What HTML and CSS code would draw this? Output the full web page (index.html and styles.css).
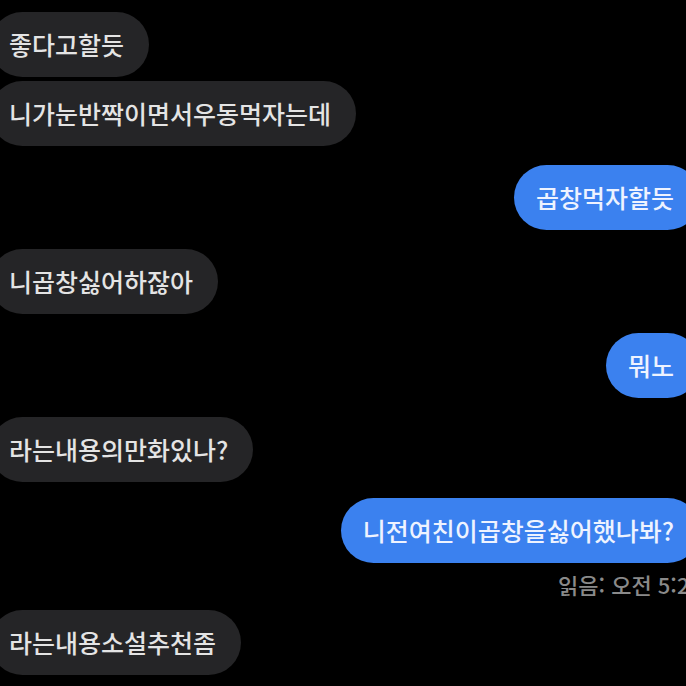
FILE: index.html
```html
<!DOCTYPE html>
<html lang="ko">
<head>
<meta charset="utf-8">
<title>채팅</title>
<link rel="stylesheet" href="styles.css">
</head>
<body>
<main class="chat">
  <div class="msg in first">좋다고할듯</div>
  <div class="msg in same">니가눈반짝이면서우동먹자는데</div>
  <div class="msg out switch">곱창먹자할듯</div>
  <div class="msg in switch">니곱창싫어하잖아</div>
  <div class="msg out switch">뭐노</div>
  <div class="msg in switch">라는내용의만화있나?</div>
  <div class="msg out switch-sm">니전여친이곱창을싫어했나봐?</div>
  <div class="read">읽음: 오전 5:20</div>
  <div class="msg in">라는내용소설추천좀</div>
</main>
</body>
</html>
```

FILE: styles.css
```css
html, body {
  margin: 0;
  padding: 0;
  background: #000;
  width: 686px;
  height: 686px;
  overflow: hidden;
}

.chat {
  display: flex;
  flex-direction: column;
  font-family: "Noto Sans CJK KR", "Noto Sans", sans-serif;
  padding-top: 12px;
}

.msg {
  height: 65px;
  line-height: 65px;
  border-radius: 33px;
  font-size: 25px;
  font-weight: 500;
  white-space: nowrap;
  box-sizing: border-box;
}

.in {
  align-self: flex-start;
  background: #252527;
  color: #e4e4e4;
  margin-left: -10px;
  padding: 0 25px 0 19px;
}

.out {
  align-self: flex-end;
  background: #3b81ef;
  color: #eef3ff;
  margin-right: -14px;
  padding: 0 26px 0 22px;
}

.same { margin-top: 4px; }
.switch { margin-top: 19px; }
.switch-sm { margin-top: 16px; }

.read {
  align-self: flex-end;
  margin-right: -16px;
  margin-top: 9px;
  margin-bottom: 14px;
  font-family: "Noto Sans CJK KR", "Noto Sans", sans-serif;
  font-size: 22px;
  font-weight: 500;
  line-height: 24px;
  color: #8a8a8a;
  white-space: nowrap;
}
```
